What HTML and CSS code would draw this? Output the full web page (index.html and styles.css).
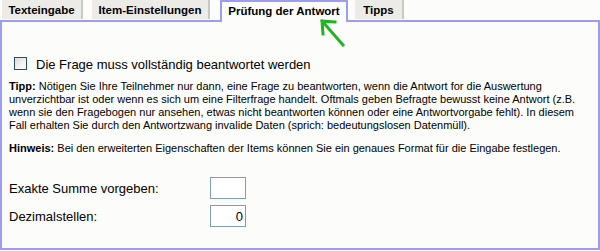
FILE: index.html
```html
<!DOCTYPE html>
<html lang="de">
<head>
<meta charset="utf-8">
<title>Prüfung der Antwort</title>
<link rel="stylesheet" href="styles.css">
</head>
<body>
<div class="tabs">
  <div class="tab tab-text">Texteingabe</div>
  <div class="tab tab-item">Item-Einstellungen</div>
  <div class="tab tab-active">Prüfung der Antwort</div>
  <div class="tab tab-tips">Tipps</div>
</div>
<svg class="arrow" width="30" height="32" viewBox="0 0 30 32">
  <path d="M3 3 L24 27 M3 3 L16 4 M3 3 L4 16" fill="none" stroke="#22b322" stroke-width="3" stroke-linecap="square"/>
</svg>
<div class="panel">
  <label class="check-row">
    <input type="checkbox" class="check">
    <span class="check-label">Die Frage muss vollständig beantwortet werden</span>
  </label>
  <p class="note"><b>Tipp:</b> Nötigen Sie Ihre Teilnehmer nur dann, eine Frage zu beantworten, wenn die Antwort for die Auswertung<br>unverzichtbar ist oder wenn es sich um eine Filterfrage handelt. Oftmals geben Befragte bewusst keine Antwort (z.B.<br>wenn sie den Fragebogen nur ansehen, etwas nicht beantworten können oder eine Antwortvorgabe fehlt). In diesem<br>Fall erhalten Sie durch den Antwortzwang invalide Daten (sprich: bedeutungslosen Datenmüll).</p>
  <p class="note hint"><b>Hinweis:</b> Bei den erweiterten Eigenschaften der Items können Sie ein genaues Format für die Eingabe festlegen.</p>
  <div class="form">
    <span class="form-label">Exakte Summe vorgeben:</span>
    <input class="field" type="text" value="">
    <span class="form-label">Dezimalstellen:</span>
    <input class="field" type="text" value="0">
  </div>
</div>
</body>
</html>
```
FILE: styles.css
```css
html, body {
  margin: 0;
  padding: 0;
  background: #fcfcfa;
  font-family: "Liberation Sans", Arial, sans-serif;
  color: #000;
}

.tabs {
  display: flex;
  align-items: flex-start;
  height: 20px;
  padding-left: 2px;
}

.tab {
  box-sizing: border-box;
  height: 19px;
  background: #ecebe7;
  border-right: 2px solid #c8c8c4;
  font-size: 11.5px;
  font-weight: bold;
  line-height: 19px;
  padding-top: 1px;
  text-align: center;
  white-space: nowrap;
}

.tab-text { width: 81px; margin-right: 9px; }
.tab-item { width: 118px; margin-right: 10px; }
.tab-active {
  position: relative;
  z-index: 1;
  width: 128px;
  height: 22px;
  background: #fcfcfa;
  border: 2px solid #9c9cf4;
  border-bottom: none;
  line-height: 18px;
  padding-top: 0;
  margin-right: 7px;
}
.tab-tips { width: 49px; }

.arrow {
  position: absolute;
  left: 319px;
  top: 18px;
  z-index: 2;
}

.panel {
  box-sizing: border-box;
  width: 600px;
  height: 230px;
  border: 2px solid #9c9cf4;
  padding: 0 7px;
}

.check-row {
  display: flex;
  align-items: center;
  height: 14px;
  margin-top: 34px;
  margin-left: 5px;
}

.check {
  appearance: none;
  -webkit-appearance: none;
  box-sizing: border-box;
  width: 13px;
  height: 13px;
  margin: 0;
  border: 1px solid #1c5180;
  background: linear-gradient(135deg, #dcdcd6 0%, #f4f4f0 60%, #ffffff 100%);
}

.check-label {
  margin-left: 9px;
  font-size: 13px;
  position: relative;
  top: 1px;
}

.note {
  margin: 10px 0 0;
  font-size: 11px;
  line-height: 13px;
}

.hint {
  margin-top: 10px;
}

.form {
  display: grid;
  grid-template-columns: 201px 36px;
  row-gap: 6px;
  margin-top: 22px;
  align-items: center;
}

.form-label {
  font-size: 13px;
}

.field {
  box-sizing: border-box;
  width: 36px;
  height: 22px;
  margin: 0;
  border: 1px solid #7f9db9;
  background: #fff;
  padding: 0 2px 0 0;
  font-family: "Liberation Sans", Arial, sans-serif;
  font-size: 13px;
  text-align: right;
  outline: none;
}
```
